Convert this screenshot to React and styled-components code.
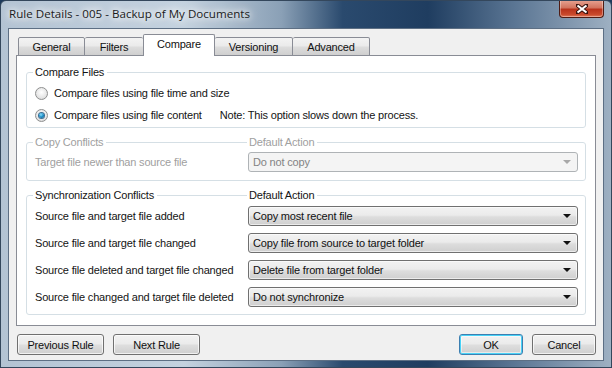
import React from "react";
import styled, { createGlobalStyle } from "styled-components";

const GlobalStyle = createGlobalStyle`
  html, body {
    margin: 0;
    padding: 0;
    background: #1d3a5c;
  }
  body {
    font-family: "Liberation Sans", Arial, sans-serif;
    font-size: 11px;
    letter-spacing: -0.18px;
    color: #141414;
  }
`;

const Window = styled.div`
  width: 612px;
  height: 368px;
  box-sizing: border-box;
  display: flex;
  flex-direction: column;
  border-radius: 6px 6px 0 0;
  border: 1px solid #34475c;
  background: linear-gradient(90deg, #b3c3d3 0%, #c4d2df 30%, #8aa0b6 46%, #2a4a6e 56%, #1f3d60 70%, #5a7593 84%, #9eb0c2 100%);
  overflow: hidden;
`;

const TitleBar = styled.div`
  height: 27px;
  flex: none;
  display: flex;
  align-items: flex-start;
  justify-content: space-between;
  padding-left: 8px;
  padding-right: 7px;
`;

const Title = styled.div`
  font-family: "Open Sans", "Noto Sans", sans-serif;
  font-size: 11.6px;
  letter-spacing: 0;
  color: #1b1b1b;
  margin-top: 5px;
  text-shadow: 0 0 6px #fff, 0 0 10px #fff, 0 0 14px rgba(255, 255, 255, 0.9);
`;

const CloseButton = styled.div`
  width: 45px;
  height: 18px;
  margin-top: -1px;
  box-sizing: border-box;
  border: 1px solid #4f1c14;
  border-top: none;
  border-radius: 0 0 4px 4px;
  background: linear-gradient(#e8a493 0%, #d2745f 45%, #b9331c 55%, #c9492c 85%, #e27a5b 100%);
  box-shadow: inset 0 0 0 1px rgba(255, 255, 255, 0.35);
  display: flex;
  align-items: center;
  justify-content: center;
`;

const Client = styled.div`
  flex: 1;
  margin: 0 7px 6px 7px;
  border: 1px solid #5d6f84;
  background: #f0f0f0;
  display: flex;
  flex-direction: column;
  padding: 6px 7px 0 7px;
`;

const TabStrip = styled.div`
  display: flex;
  align-items: flex-end;
  padding-left: 2px;
  height: 21px;
  position: relative;
  z-index: 1;
  margin-bottom: -1px;
`;

const Tab = styled.div`
  box-sizing: border-box;
  width: ${(p) => p.$w}px;
  height: ${(p) => (p.$active ? 22 : 19)}px;
  border: 1px solid #898c95;
  border-bottom: ${(p) => (p.$active ? "none" : "1px solid #898c95")};
  border-left: ${(p) => (p.$first || p.$active ? "1px solid #898c95" : "none")};
  border-right: ${(p) => (p.$beforeActive ? "none" : "1px solid #898c95")};
  border-radius: 2px 2px 0 0;
  background: ${(p) =>
    p.$active ? "#ffffff" : "linear-gradient(#f3f3f3 0%, #ebebeb 45%, #dcdcdc 55%, #cfcfcf 100%)"};
  display: flex;
  justify-content: center;
  padding-top: 3px;
  color: #111;
`;

const Panel = styled.div`
  height: 271px;
  box-sizing: border-box;
  border: 1px solid #898c95;
  background: #ffffff;
  padding: 16px 9px 0 9px;
  display: flex;
  flex-direction: column;
  gap: 14px;
`;

const Group = styled.div`
  position: relative;
  border: 1px solid #d5dfe5;
  border-radius: 3px;
  padding: ${(p) => p.$pad};
  display: flex;
  flex-direction: column;
  gap: ${(p) => p.$gap || 0}px;
`;

const Captions = styled.div`
  position: absolute;
  top: -7px;
  left: 6px;
  right: 0;
  display: grid;
  grid-template-columns: 213px 1fr;
  line-height: 13px;
`;

const Caption = styled.span`
  justify-self: start;
  background: #fff;
  padding: 0 3px 0 2px;
  margin-left: ${(p) => p.$ml || 0}px;
  color: ${(p) => (p.$disabled ? "#a0a0a0" : "#141414")};
`;

const RadioRow = styled.label`
  height: 22px;
  display: flex;
  align-items: center;
  padding-left: 8px;
`;

const RadioDot = styled.span`
  width: 11px;
  height: 11px;
  border-radius: 50%;
  border: 1px solid #8e8f8f;
  background: radial-gradient(circle at 50% 40%, #ffffff 0%, #e6e6e6 60%, #cfcfcf 100%);
  margin-right: 6px;
  display: flex;
  align-items: center;
  justify-content: center;
  &::after {
    content: "";
    display: ${(p) => (p.$checked ? "block" : "none")};
    width: 5px;
    height: 5px;
    border-radius: 50%;
    background: radial-gradient(circle at 40% 35%, #8ee0ff 0%, #1b8fc8 50%, #0a4d7a 100%);
    box-shadow: 0 0 0 1px #3a6e94;
  }
`;

const Note = styled.span`
  margin-left: 18px;
`;

const Row = styled.div`
  display: grid;
  grid-template-columns: 213px 330px;
  align-items: center;
  height: 20px;
  padding-left: 8px;
  color: ${(p) => (p.$disabled ? "#a0a0a0" : "#141414")};
`;

const Combo = styled.div`
  box-sizing: border-box;
  height: 20px;
  border: 1px solid ${(p) => (p.$disabled ? "#afb3b6" : "#707070")};
  border-radius: 3px;
  background: ${(p) =>
    p.$disabled ? "#f4f4f4" : "linear-gradient(#f2f2f2 0%, #ebebeb 45%, #dddddd 55%, #cfcfcf 100%)"};
  box-shadow: ${(p) => (p.$disabled ? "none" : "inset 0 0 0 1px rgba(255,255,255,0.6)")};
  display: flex;
  align-items: center;
  justify-content: space-between;
  padding: 0 6px 0 4px;
  color: ${(p) => (p.$disabled ? "#838383" : "#111")};
`;

const Arrow = styled.span`
  width: 0;
  height: 0;
  border-left: 4px solid transparent;
  border-right: 4px solid transparent;
  border-top: 4px solid ${(p) => (p.$disabled ? "#a8a8a8" : "#111")};
`;

const ButtonBar = styled.div`
  display: flex;
  align-items: center;
  justify-content: space-between;
  padding: 8px 0 0 1px;
`;

const ButtonGroup = styled.div`
  display: flex;
  gap: 9px;
`;

const Button = styled.div`
  box-sizing: border-box;
  width: ${(p) => p.$w}px;
  height: 21px;
  border: 1px solid ${(p) => (p.$default ? "#3c7fb1" : "#707070")};
  border-radius: 3px;
  background: linear-gradient(#f2f2f2 0%, #ebebeb 45%, #dddddd 55%, #cfcfcf 100%);
  box-shadow: ${(p) =>
    p.$default ? "inset 0 0 0 1px #48d2f7, inset 0 0 0 2px rgba(255,255,255,0.5)" : "inset 0 0 0 1px rgba(255,255,255,0.7)"};
  display: flex;
  align-items: center;
  justify-content: center;
  color: #111;
`;

const tabs = [
  { label: "General", w: 67 },
  { label: "Filters", w: 58 },
  { label: "Compare", w: 72, active: true },
  { label: "Versioning", w: 78 },
  { label: "Advanced", w: 77 },
];

const syncRows = [
  ["Source file and target file added", "Copy most recent file"],
  ["Source file and target file changed", "Copy file from source to target folder"],
  ["Source file deleted and target file changed", "Delete file from target folder"],
  ["Source file changed and target file deleted", "Do not synchronize"],
];

export default function App() {
  return (
    <>
      <GlobalStyle />
      <Window>
        <TitleBar>
          <Title>Rule Details - 005 - Backup of My Documents</Title>
          <CloseButton>
            <svg width="12" height="10" viewBox="0 0 12 10">
              <path
                d="M1 1 L11 9 M11 1 L1 9"
                stroke="#3a1410"
                strokeWidth="4"
                strokeLinecap="square"
              />
              <path d="M1.5 1.5 L10.5 8.5 M10.5 1.5 L1.5 8.5" stroke="#fff" strokeWidth="2.2" />
            </svg>
          </CloseButton>
        </TitleBar>
        <Client>
          <TabStrip>
            {tabs.map((t, i) => (
              <Tab
                key={t.label}
                $w={t.w}
                $active={t.active}
                $first={i === 0}
                $beforeActive={tabs[i + 1] && tabs[i + 1].active}
              >
                {t.label}
              </Tab>
            ))}
          </TabStrip>
          <Panel>
            <Group $pad="9px 0 1px 0">
              <Captions>
                <Caption>Compare Files</Caption>
              </Captions>
              <RadioRow>
                <RadioDot />
                Compare files using file time and size
              </RadioRow>
              <RadioRow>
                <RadioDot $checked />
                Compare files using file content
                <Note>Note: This option slows down the process.</Note>
              </RadioRow>
            </Group>
            <Group $pad="9px 0 8px 0">
              <Captions>
                <Caption $disabled>Copy Conflicts</Caption>
                <Caption $disabled $ml={1}>Default Action</Caption>
              </Captions>
              <Row $disabled>
                <span>Target file newer than source file</span>
                <Combo $disabled>
                  Do not copy
                  <Arrow $disabled />
                </Combo>
              </Row>
            </Group>
            <Group $pad="10px 0 7px 0" $gap={7}>
              <Captions>
                <Caption>Synchronization Conflicts</Caption>
                <Caption $ml={1}>Default Action</Caption>
              </Captions>
              {syncRows.map(([label, value]) => (
                <Row key={label}>
                  <span>{label}</span>
                  <Combo>
                    {value}
                    <Arrow />
                  </Combo>
                </Row>
              ))}
            </Group>
          </Panel>
          <ButtonBar>
            <ButtonGroup>
              <Button $w={87}>Previous Rule</Button>
              <Button $w={87}>Next Rule</Button>
            </ButtonGroup>
            <ButtonGroup>
              <Button $w={64} $default>OK</Button>
              <Button $w={64}>Cancel</Button>
            </ButtonGroup>
          </ButtonBar>
        </Client>
      </Window>
    </>
  );
}
